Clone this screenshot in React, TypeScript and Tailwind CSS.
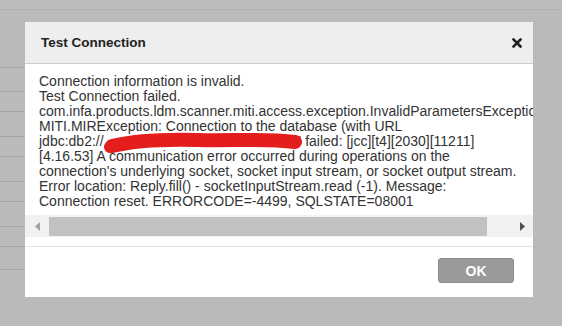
import React from "react";

const lines: React.ReactNode[] = [
  "Connection information is invalid.",
  "Test Connection failed.",
  "com.infa.products.ldm.scanner.miti.access.exception.InvalidParametersException:",
  "MITI.MIRException: Connection to the database (with URL",
  <>
    jdbc:db2://<span className="inline-block w-[195px]" />
    {"' failed: [jcc][t4][2030][11211]"}
  </>,
  "[4.16.53] A communication error occurred during operations on the",
  "connection's underlying socket, socket input stream, or socket output stream.",
  "Error location: Reply.fill() - socketInputStream.read (-1). Message:",
  "Connection reset. ERRORCODE=-4499, SQLSTATE=08001",
];

const rowHeights = [24, 20, 25, 20, 25, 20, 25, 20, 23];

export default function App() {
  return (
    <div
      className="relative w-[562px] h-[326px] overflow-hidden bg-[#bababa]"
      style={{ fontFamily: '"Liberation Sans", Arial, sans-serif' }}
    >
      {/* background page */}
      <div className="h-[10px] bg-[#bcbcbc] border-b border-[#b0b0b0]" />
      <div className="w-[24px] mt-[57px] flex flex-col">
        {rowHeights.map((h, i) => (
          <div key={i} className="border-t border-[#a4a4a4]" style={{ height: h }} />
        ))}
        <div className="border-t border-[#a4a4a4]" />
      </div>

      {/* dialog */}
      <div className="absolute left-[25px] top-[22px] w-[508px] h-[275px] bg-white flex flex-col">
        <div className="h-[42px] shrink-0 bg-[#eeeeee] border-b border-[#cdcdcd] flex items-center justify-between pl-[16px] pr-[11px]">
          <span className="text-[13.5px] font-bold text-[#222] mt-[1px]">Test Connection</span>
          <svg width="10" height="10" viewBox="0 0 10 10" className="mt-[1px]">
            <path d="M1.5 1.5 L8.5 8.5 M8.5 1.5 L1.5 8.5" stroke="#222" strokeWidth="2.6" strokeLinecap="square" />
          </svg>
        </div>

        <div className="relative h-[151px] shrink-0 overflow-hidden pt-[10px] pl-[14px]">
          {lines.map((l, i) => (
            <div key={i} className="whitespace-pre text-[14px] leading-[15px] text-[#333]">
              {l}
            </div>
          ))}
          <svg
            className="absolute left-[78px] top-[64px]"
            width="206"
            height="28"
            viewBox="0 0 206 28"
          >
            <path
              d="M9 18 C 30 13, 60 11, 95 12 C 130 13, 160 10, 192 14"
              stroke="#e41d1d"
              strokeWidth="14"
              strokeLinecap="round"
              fill="none"
            />
            <path d="M7 19 L 18 16" stroke="#e41d1d" strokeWidth="12" strokeLinecap="round" />
          </svg>
        </div>

        <div className="h-[22px] shrink-0 bg-[#f1f1f1] flex items-center">
          <div className="w-[24px] h-full flex items-center justify-center">
            <svg width="5" height="9" viewBox="0 0 5 9">
              <path d="M5 0 L0 4.5 L5 9 Z" fill="#a3a3a3" />
            </svg>
          </div>
          <div className="w-[438px] h-[19px] bg-[#c1c1c1]" />
          <div className="flex-1 h-full flex items-center justify-end pr-[8px]">
            <svg width="5" height="9" viewBox="0 0 5 9">
              <path d="M0 0 L5 4.5 L0 9 Z" fill="#505050" />
            </svg>
          </div>
        </div>

        <div className="mt-[9px] border-t border-[#e3e3e3] flex justify-end pt-[11px] pr-[19px]">
          <button className="w-[76px] h-[25px] rounded-[3px] bg-[#9a9a9a] border border-[#8e8e8e] text-white font-bold text-[14px] leading-none">
            OK
          </button>
        </div>
      </div>
    </div>
  );
}
